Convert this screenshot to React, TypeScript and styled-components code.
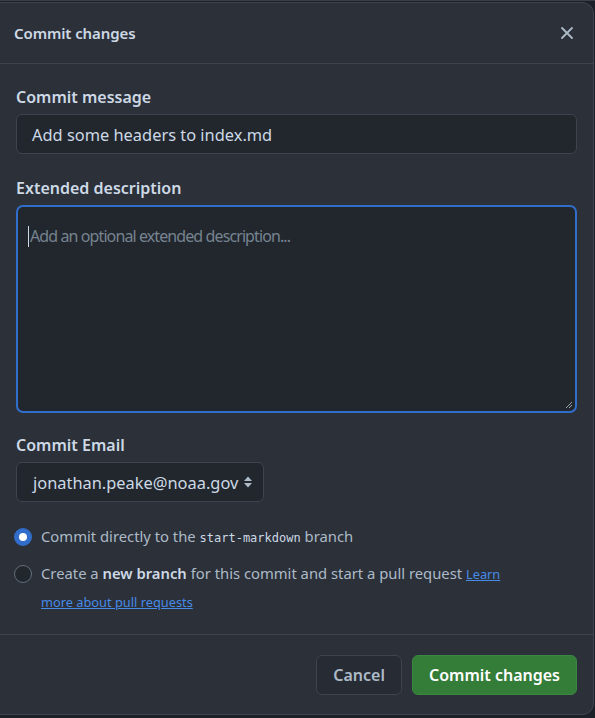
import React from "react";
import styled, { createGlobalStyle } from "styled-components";

const FONT = `"Noto Sans", "Open Sans", Arial, sans-serif`;

const Global = createGlobalStyle`
  html, body { margin: 0; padding: 0; background: #1c2128; }
  body { font-family: ${FONT}; }
  * { box-sizing: border-box; }
`;

const Page = styled.div`
  width: 595px;
  height: 718px;
  overflow: hidden;
  background: #1c2128;
  padding-top: 1px;
  border-top: 1px solid #3a4049;
`;

const Dialog = styled.div`
  width: 594px;
  height: 713px;
  background: #2b3039;
  border: 1px solid #3d444d;
  border-left: none;
  border-radius: 0 12px 12px 0;
  display: flex;
  flex-direction: column;
`;

const Header = styled.div`
  flex: none;
  height: 61px;
  display: flex;
  align-items: center;
  justify-content: space-between;
  padding: 0 19px 0 14px;
  border-bottom: 1px solid #3d444d;
`;

const Title = styled.h1`
  margin: 0;
  font-size: 15px;
  font-weight: 600;
  letter-spacing: -0.1px;
  color: #cdd9e5;
`;

const CloseButton = styled.button`
  background: none;
  border: none;
  padding: 4px 0 4px 4px;
  display: flex;
  cursor: pointer;
`;

const Body = styled.div`
  flex: 1;
  padding: 22px 16px 0;
  display: flex;
  flex-direction: column;
`;

const Field = styled.div<{ $gap?: number }>`
  display: flex;
  flex-direction: column;
  margin-bottom: ${(p) => p.$gap ?? 23}px;
`;

const Label = styled.label`
  font-size: 16px;
  line-height: 22px;
  font-weight: 600;
  color: #cdd9e5;
  margin-bottom: 6px;
`;

const Input = styled.div`
  height: 40px;
  background: #22272e;
  border: 1px solid #3d444d;
  border-radius: 6px;
  padding: 0 15px;
  display: flex;
  align-items: center;
  font-size: 16.4px;
  color: #cdd9e5;
`;

const TextArea = styled.div`
  position: relative;
  height: 208px;
  background: #22272e;
  border: 2px solid #316dca;
  border-radius: 7px;
  padding: 17px 10px;
  font-size: 16px;
  letter-spacing: -0.9px;
  line-height: 24px;
  color: #768390;
`;

const Caret = styled.span`
  display: inline-block;
  width: 1px;
  height: 21px;
  background: #cdd9e5;
  vertical-align: -5px;
  margin-right: 1px;
`;

const Grip = styled.svg`
  position: absolute;
  right: 2px;
  bottom: 2px;
`;

const Select = styled.div`
  align-self: flex-start;
  width: 248px;
  height: 40px;
  background: #22272e;
  border: 1px solid #3d444d;
  border-radius: 6px;
  padding: 0 10px 0 16px;
  display: flex;
  align-items: center;
  justify-content: space-between;
  font-size: 16.4px;
  color: #cdd9e5;
`;

const RadioList = styled.div`
  display: flex;
  flex-direction: column;
  gap: 10px;
  margin-left: -2px;
`;

const RadioRow = styled.div`
  display: flex;
  align-items: flex-start;
  gap: 9px;
`;

const Radio = styled.span<{ $checked?: boolean }>`
  flex: none;
  width: 18px;
  height: 18px;
  margin-top: 5px;
  border-radius: 50%;
  background: ${(p) => (p.$checked ? "#fff" : "#22272e")};
  border: ${(p) => (p.$checked ? "5px solid #316dca" : "1px solid #636e7b")};
`;

const RadioText = styled.span`
  max-width: 470px;
  font-size: 14.8px;
  line-height: 27px;
  color: #adbac7;
`;

const Code = styled.code`
  font-family: "DejaVu Sans Mono", "Liberation Mono", monospace;
  font-size: 12px;
  line-height: 1;
  color: #cdd9e5;
`;

const Strong = styled.strong`
  font-weight: 600;
  color: #cdd9e5;
`;

const Link = styled.a`
  color: #478be6;
  font-size: 12.8px;
  text-decoration: underline;
`;

const Footer = styled.div`
  flex: none;
  border-top: 1px solid #3d444d;
  padding: 20px 16px 19px;
  display: flex;
  justify-content: flex-end;
  gap: 10px;
`;

const Button = styled.button<{ $primary?: boolean }>`
  height: 40px;
  padding: 0 16px;
  border-radius: 6px;
  font-family: ${FONT};
  font-size: 16px;
  font-weight: 600;
  color: ${(p) => (p.$primary ? "#ffffff" : "#adbac7")};
  background: ${(p) => (p.$primary ? "#347d39" : "#272c34")};
  border: 1px solid ${(p) => (p.$primary ? "#3b8640" : "#3d444d")};
  cursor: pointer;
`;

export default function App() {
  return (
    <>
      <Global />
      <Page>
        <Dialog>
          <Header>
            <Title>Commit changes</Title>
            <CloseButton aria-label="Close">
              <svg width="14" height="14" viewBox="0 0 14 14">
                <path d="M2 2 L12 12 M12 2 L2 12" stroke="#adbac7" strokeWidth="1.8" strokeLinecap="round" />
              </svg>
            </CloseButton>
          </Header>
          <Body>
            <Field>
              <Label>Commit message</Label>
              <Input>Add some headers to index.md</Input>
            </Field>
            <Field $gap={21}>
              <Label>Extended description</Label>
              <TextArea>
                <Caret />
                Add an optional extended description...
                <Grip width="10" height="10" viewBox="0 0 10 10">
                  <path d="M9 3 L3 9 M9 6 L6 9" stroke="#9aa4ae" strokeWidth="1" />
                </Grip>
              </TextArea>
            </Field>
            <Field $gap={21}>
              <Label>Commit Email</Label>
              <Select>
                <span>jonathan.peake@noaa.gov</span>
                <svg width="10" height="14" viewBox="0 0 10 14">
                  <path d="M5 1.5 L9 6 L1 6 Z M1 8 L9 8 L5 12.5 Z" fill="#adbac7" />
                </svg>
              </Select>
            </Field>
            <RadioList>
              <RadioRow>
                <Radio $checked />
                <RadioText>
                  Commit directly to the <Code>start-markdown</Code> branch
                </RadioText>
              </RadioRow>
              <RadioRow>
                <Radio />
                <RadioText>
                  Create a <Strong>new branch</Strong> for this commit and start a pull request{" "}
                  <Link href="#">Learn more about pull requests</Link>
                </RadioText>
              </RadioRow>
            </RadioList>
          </Body>
          <Footer>
            <Button>Cancel</Button>
            <Button $primary>Commit changes</Button>
          </Footer>
        </Dialog>
      </Page>
    </>
  );
}
